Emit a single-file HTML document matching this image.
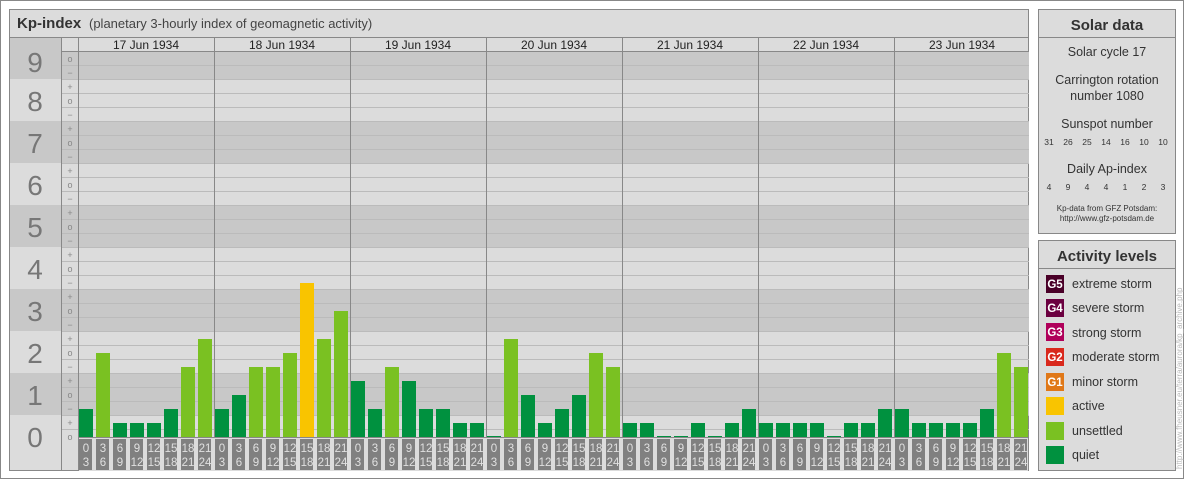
<!DOCTYPE html><html><head><meta charset="utf-8"><style>body{margin:0;background:#fff}svg{display:block;font-family:"Liberation Sans",sans-serif}</style></head><body>
<svg width="1184" height="480" xmlns="http://www.w3.org/2000/svg">
<rect x="0.5" y="0.5" width="1183" height="478" fill="#fff" stroke="#888"/>
<rect x="9.5" y="9.5" width="1019" height="461" fill="#dcdcdc" stroke="#888"/>
<line x1="9" y1="37.5" x2="1029" y2="37.5" stroke="#888"/>
<text x="17" y="28" font-size="15" font-weight="bold" fill="#333">Kp-index</text>
<text x="89" y="28" font-size="13" fill="#444">(planetary 3-hourly index of geomagnetic activity)</text>
<g fill="#c8c8c8">
<rect x="10" y="51" width="1019" height="28"/>
<rect x="10" y="38" width="51" height="13"/>
<rect x="10" y="121" width="1019" height="42"/>
<rect x="10" y="205" width="1019" height="42"/>
<rect x="10" y="289" width="1019" height="42"/>
<rect x="10" y="373" width="1019" height="42"/>
</g>
<g stroke="#bbb" stroke-width="1">
<path d="M61 65.5H1029M61 79.5H1029M61 93.5H1029M61 107.5H1029M61 121.5H1029M61 135.5H1029M61 149.5H1029M61 163.5H1029M61 177.5H1029M61 191.5H1029M61 205.5H1029M61 219.5H1029M61 233.5H1029M61 247.5H1029M61 261.5H1029M61 275.5H1029M61 289.5H1029M61 303.5H1029M61 317.5H1029M61 331.5H1029M61 345.5H1029M61 359.5H1029M61 373.5H1029M61 387.5H1029M61 401.5H1029M61 415.5H1029M61 429.5H1029"/>
</g>
<line x1="61" y1="51.5" x2="1029" y2="51.5" stroke="#888"/>
<g stroke="#888"><path d="M61.5 37V471M78.5 37V471M214.5 37V471M350.5 37V471M486.5 37V471M622.5 37V471M758.5 37V471M894.5 37V471"/></g>
<g font-size="28" fill="#777" text-anchor="middle">
<text x="35" y="72">9</text><text x="35" y="111">8</text><text x="35" y="153">7</text><text x="35" y="195">6</text><text x="35" y="237">5</text><text x="35" y="279">4</text><text x="35" y="321">3</text><text x="35" y="363">2</text><text x="35" y="405">1</text><text x="35" y="447">0</text>
</g>
<g font-size="9" fill="#888" text-anchor="middle">
<text x="70" y="62">o</text><text x="70" y="76">−</text><text x="70" y="90">+</text><text x="70" y="104">o</text><text x="70" y="118">−</text><text x="70" y="132">+</text><text x="70" y="146">o</text><text x="70" y="160">−</text><text x="70" y="174">+</text><text x="70" y="188">o</text><text x="70" y="202">−</text><text x="70" y="216">+</text><text x="70" y="230">o</text><text x="70" y="244">−</text><text x="70" y="258">+</text><text x="70" y="272">o</text><text x="70" y="286">−</text><text x="70" y="300">+</text><text x="70" y="314">o</text><text x="70" y="328">−</text><text x="70" y="342">+</text><text x="70" y="356">o</text><text x="70" y="370">−</text><text x="70" y="384">+</text><text x="70" y="398">o</text><text x="70" y="412">−</text><text x="70" y="426">+</text><text x="70" y="440">o</text>
</g>
<g font-size="12" fill="#222" text-anchor="middle">
<text x="146" y="49">17 Jun 1934</text><text x="282" y="49">18 Jun 1934</text><text x="418" y="49">19 Jun 1934</text><text x="554" y="49">20 Jun 1934</text><text x="690" y="49">21 Jun 1934</text><text x="826" y="49">22 Jun 1934</text><text x="962" y="49">23 Jun 1934</text>
</g>
<rect x="79" y="437" width="949" height="34" fill="#dcdcdc"/>
<g>
<rect x="79" y="409" width="14" height="28" fill="#00913f"/><rect x="96" y="353" width="14" height="84" fill="#7ac122"/><rect x="113" y="423" width="14" height="14" fill="#00913f"/><rect x="130" y="423" width="14" height="14" fill="#00913f"/><rect x="147" y="423" width="14" height="14" fill="#00913f"/><rect x="164" y="409" width="14" height="28" fill="#00913f"/><rect x="181" y="367" width="14" height="70" fill="#7ac122"/><rect x="198" y="339" width="14" height="98" fill="#7ac122"/>
<rect x="215" y="409" width="14" height="28" fill="#00913f"/><rect x="232" y="395" width="14" height="42" fill="#00913f"/><rect x="249" y="367" width="14" height="70" fill="#7ac122"/><rect x="266" y="367" width="14" height="70" fill="#7ac122"/><rect x="283" y="353" width="14" height="84" fill="#7ac122"/><rect x="300" y="283" width="14" height="154" fill="#f9c400"/><rect x="317" y="339" width="14" height="98" fill="#7ac122"/><rect x="334" y="311" width="14" height="126" fill="#7ac122"/>
<rect x="351" y="381" width="14" height="56" fill="#00913f"/><rect x="368" y="409" width="14" height="28" fill="#00913f"/><rect x="385" y="367" width="14" height="70" fill="#7ac122"/><rect x="402" y="381" width="14" height="56" fill="#00913f"/><rect x="419" y="409" width="14" height="28" fill="#00913f"/><rect x="436" y="409" width="14" height="28" fill="#00913f"/><rect x="453" y="423" width="14" height="14" fill="#00913f"/><rect x="470" y="423" width="14" height="14" fill="#00913f"/>
<rect x="487" y="436" width="14" height="1" fill="#00913f"/><rect x="504" y="339" width="14" height="98" fill="#7ac122"/><rect x="521" y="395" width="14" height="42" fill="#00913f"/><rect x="538" y="423" width="14" height="14" fill="#00913f"/><rect x="555" y="409" width="14" height="28" fill="#00913f"/><rect x="572" y="395" width="14" height="42" fill="#00913f"/><rect x="589" y="353" width="14" height="84" fill="#7ac122"/><rect x="606" y="367" width="14" height="70" fill="#7ac122"/>
<rect x="623" y="423" width="14" height="14" fill="#00913f"/><rect x="640" y="423" width="14" height="14" fill="#00913f"/><rect x="657" y="436" width="14" height="1" fill="#00913f"/><rect x="674" y="436" width="14" height="1" fill="#00913f"/><rect x="691" y="423" width="14" height="14" fill="#00913f"/><rect x="708" y="436" width="14" height="1" fill="#00913f"/><rect x="725" y="423" width="14" height="14" fill="#00913f"/><rect x="742" y="409" width="14" height="28" fill="#00913f"/>
<rect x="759" y="423" width="14" height="14" fill="#00913f"/><rect x="776" y="423" width="14" height="14" fill="#00913f"/><rect x="793" y="423" width="14" height="14" fill="#00913f"/><rect x="810" y="423" width="14" height="14" fill="#00913f"/><rect x="827" y="436" width="14" height="1" fill="#00913f"/><rect x="844" y="423" width="14" height="14" fill="#00913f"/><rect x="861" y="423" width="14" height="14" fill="#00913f"/><rect x="878" y="409" width="14" height="28" fill="#00913f"/>
<rect x="895" y="409" width="14" height="28" fill="#00913f"/><rect x="912" y="423" width="14" height="14" fill="#00913f"/><rect x="929" y="423" width="14" height="14" fill="#00913f"/><rect x="946" y="423" width="14" height="14" fill="#00913f"/><rect x="963" y="423" width="14" height="14" fill="#00913f"/><rect x="980" y="409" width="14" height="28" fill="#00913f"/><rect x="997" y="353" width="14" height="84" fill="#7ac122"/><rect x="1014" y="367" width="14" height="70" fill="#7ac122"/>
</g>
<line x1="78" y1="437.5" x2="1029" y2="437.5" stroke="#888"/>
<g fill="#808080">
<rect x="79" y="439" width="13" height="31"/><rect x="96" y="439" width="13" height="31"/><rect x="113" y="439" width="13" height="31"/><rect x="130" y="439" width="13" height="31"/><rect x="147" y="439" width="13" height="31"/><rect x="164" y="439" width="13" height="31"/><rect x="181" y="439" width="13" height="31"/><rect x="198" y="439" width="13" height="31"/>
<rect x="215" y="439" width="13" height="31"/><rect x="232" y="439" width="13" height="31"/><rect x="249" y="439" width="13" height="31"/><rect x="266" y="439" width="13" height="31"/><rect x="283" y="439" width="13" height="31"/><rect x="300" y="439" width="13" height="31"/><rect x="317" y="439" width="13" height="31"/><rect x="334" y="439" width="13" height="31"/>
<rect x="351" y="439" width="13" height="31"/><rect x="368" y="439" width="13" height="31"/><rect x="385" y="439" width="13" height="31"/><rect x="402" y="439" width="13" height="31"/><rect x="419" y="439" width="13" height="31"/><rect x="436" y="439" width="13" height="31"/><rect x="453" y="439" width="13" height="31"/><rect x="470" y="439" width="13" height="31"/>
<rect x="487" y="439" width="13" height="31"/><rect x="504" y="439" width="13" height="31"/><rect x="521" y="439" width="13" height="31"/><rect x="538" y="439" width="13" height="31"/><rect x="555" y="439" width="13" height="31"/><rect x="572" y="439" width="13" height="31"/><rect x="589" y="439" width="13" height="31"/><rect x="606" y="439" width="13" height="31"/>
<rect x="623" y="439" width="13" height="31"/><rect x="640" y="439" width="13" height="31"/><rect x="657" y="439" width="13" height="31"/><rect x="674" y="439" width="13" height="31"/><rect x="691" y="439" width="13" height="31"/><rect x="708" y="439" width="13" height="31"/><rect x="725" y="439" width="13" height="31"/><rect x="742" y="439" width="13" height="31"/>
<rect x="759" y="439" width="13" height="31"/><rect x="776" y="439" width="13" height="31"/><rect x="793" y="439" width="13" height="31"/><rect x="810" y="439" width="13" height="31"/><rect x="827" y="439" width="13" height="31"/><rect x="844" y="439" width="13" height="31"/><rect x="861" y="439" width="13" height="31"/><rect x="878" y="439" width="13" height="31"/>
<rect x="895" y="439" width="13" height="31"/><rect x="912" y="439" width="13" height="31"/><rect x="929" y="439" width="13" height="31"/><rect x="946" y="439" width="13" height="31"/><rect x="963" y="439" width="13" height="31"/><rect x="980" y="439" width="13" height="31"/><rect x="997" y="439" width="13" height="31"/><rect x="1014" y="439" width="13" height="31"/>
</g>
<g font-size="11.5" fill="#e0e0e0" text-anchor="middle">
<g><text x="86" y="452">0</text><text x="86" y="466">3</text><text x="103" y="452">3</text><text x="103" y="466">6</text><text x="120" y="452">6</text><text x="120" y="466">9</text><text x="137" y="452">9</text><text x="137" y="466">12</text><text x="154" y="452">12</text><text x="154" y="466">15</text><text x="171" y="452">15</text><text x="171" y="466">18</text><text x="188" y="452">18</text><text x="188" y="466">21</text><text x="205" y="452">21</text><text x="205" y="466">24</text></g>
<g transform="translate(136,0)"><text x="86" y="452">0</text><text x="86" y="466">3</text><text x="103" y="452">3</text><text x="103" y="466">6</text><text x="120" y="452">6</text><text x="120" y="466">9</text><text x="137" y="452">9</text><text x="137" y="466">12</text><text x="154" y="452">12</text><text x="154" y="466">15</text><text x="171" y="452">15</text><text x="171" y="466">18</text><text x="188" y="452">18</text><text x="188" y="466">21</text><text x="205" y="452">21</text><text x="205" y="466">24</text></g>
<g transform="translate(272,0)"><text x="86" y="452">0</text><text x="86" y="466">3</text><text x="103" y="452">3</text><text x="103" y="466">6</text><text x="120" y="452">6</text><text x="120" y="466">9</text><text x="137" y="452">9</text><text x="137" y="466">12</text><text x="154" y="452">12</text><text x="154" y="466">15</text><text x="171" y="452">15</text><text x="171" y="466">18</text><text x="188" y="452">18</text><text x="188" y="466">21</text><text x="205" y="452">21</text><text x="205" y="466">24</text></g>
<g transform="translate(408,0)"><text x="86" y="452">0</text><text x="86" y="466">3</text><text x="103" y="452">3</text><text x="103" y="466">6</text><text x="120" y="452">6</text><text x="120" y="466">9</text><text x="137" y="452">9</text><text x="137" y="466">12</text><text x="154" y="452">12</text><text x="154" y="466">15</text><text x="171" y="452">15</text><text x="171" y="466">18</text><text x="188" y="452">18</text><text x="188" y="466">21</text><text x="205" y="452">21</text><text x="205" y="466">24</text></g>
<g transform="translate(544,0)"><text x="86" y="452">0</text><text x="86" y="466">3</text><text x="103" y="452">3</text><text x="103" y="466">6</text><text x="120" y="452">6</text><text x="120" y="466">9</text><text x="137" y="452">9</text><text x="137" y="466">12</text><text x="154" y="452">12</text><text x="154" y="466">15</text><text x="171" y="452">15</text><text x="171" y="466">18</text><text x="188" y="452">18</text><text x="188" y="466">21</text><text x="205" y="452">21</text><text x="205" y="466">24</text></g>
<g transform="translate(680,0)"><text x="86" y="452">0</text><text x="86" y="466">3</text><text x="103" y="452">3</text><text x="103" y="466">6</text><text x="120" y="452">6</text><text x="120" y="466">9</text><text x="137" y="452">9</text><text x="137" y="466">12</text><text x="154" y="452">12</text><text x="154" y="466">15</text><text x="171" y="452">15</text><text x="171" y="466">18</text><text x="188" y="452">18</text><text x="188" y="466">21</text><text x="205" y="452">21</text><text x="205" y="466">24</text></g>
<g transform="translate(816,0)"><text x="86" y="452">0</text><text x="86" y="466">3</text><text x="103" y="452">3</text><text x="103" y="466">6</text><text x="120" y="452">6</text><text x="120" y="466">9</text><text x="137" y="452">9</text><text x="137" y="466">12</text><text x="154" y="452">12</text><text x="154" y="466">15</text><text x="171" y="452">15</text><text x="171" y="466">18</text><text x="188" y="452">18</text><text x="188" y="466">21</text><text x="205" y="452">21</text><text x="205" y="466">24</text></g>
</g>
<rect x="1038.5" y="9.5" width="137" height="224" fill="#dcdcdc" stroke="#888"/>
<line x1="1038" y1="37.5" x2="1176" y2="37.5" stroke="#888"/>
<g fill="#333" text-anchor="middle">
<text x="1107" y="30" font-size="15" font-weight="bold">Solar data</text>
<text x="1107" y="56" font-size="12.5">Solar cycle 17</text>
<text x="1107" y="84" font-size="12.5">Carrington rotation</text>
<text x="1107" y="100" font-size="12.5">number 1080</text>
<text x="1107" y="128" font-size="12.5">Sunspot number</text>
<text x="1107" y="173" font-size="12.5">Daily Ap-index</text>
</g>
<g fill="#333" text-anchor="middle" font-size="8.5">
<text x="1049" y="145">31</text><text x="1068" y="145">26</text><text x="1087" y="145">25</text><text x="1106" y="145">14</text><text x="1125" y="145">16</text><text x="1144" y="145">10</text><text x="1163" y="145">10</text>
<text x="1049" y="190">4</text><text x="1068" y="190">9</text><text x="1087" y="190">4</text><text x="1106" y="190">4</text><text x="1125" y="190">1</text><text x="1144" y="190">2</text><text x="1163" y="190">3</text>
<text x="1107" y="211" font-size="8">Kp-data from GFZ Potsdam:</text>
<text x="1107" y="221" font-size="8">http://www.gfz-potsdam.de</text>
</g>
<rect x="1038.5" y="240.5" width="137" height="230" fill="#dcdcdc" stroke="#888"/>
<line x1="1038" y1="268.5" x2="1176" y2="268.5" stroke="#888"/>
<text x="1107" y="261" font-size="15" font-weight="bold" fill="#333" text-anchor="middle">Activity levels</text>
<g>
<rect x="1046" y="275" width="18" height="18" fill="#4a0028"/><rect x="1046" y="299" width="18" height="18" fill="#6b0040"/><rect x="1046" y="323" width="18" height="18" fill="#b0005a"/><rect x="1046" y="348" width="18" height="18" fill="#d9281c"/><rect x="1046" y="373" width="18" height="18" fill="#e07818"/><rect x="1046" y="397" width="18" height="18" fill="#f9c400"/><rect x="1046" y="422" width="18" height="18" fill="#7ac122"/><rect x="1046" y="446" width="18" height="18" fill="#00913f"/>
</g>
<g fill="#fff" font-size="11.5" font-weight="bold" text-anchor="middle">
<text x="1055" y="288">G5</text><text x="1055" y="312">G4</text><text x="1055" y="336">G3</text><text x="1055" y="361">G2</text><text x="1055" y="386">G1</text>
</g>
<g fill="#333" font-size="12.5">
<text x="1072" y="288">extreme storm</text><text x="1072" y="312">severe storm</text><text x="1072" y="337">strong storm</text><text x="1072" y="361">moderate storm</text><text x="1072" y="386">minor storm</text><text x="1072" y="410">active</text><text x="1072" y="435">unsettled</text><text x="1072" y="459">quiet</text>
</g>
<text transform="translate(1182,469) rotate(-90)" font-size="8" fill="#bbb">http://www.fheusner.eu/terra/aurora/kp_archive.php</text>
</svg>
</body></html>
